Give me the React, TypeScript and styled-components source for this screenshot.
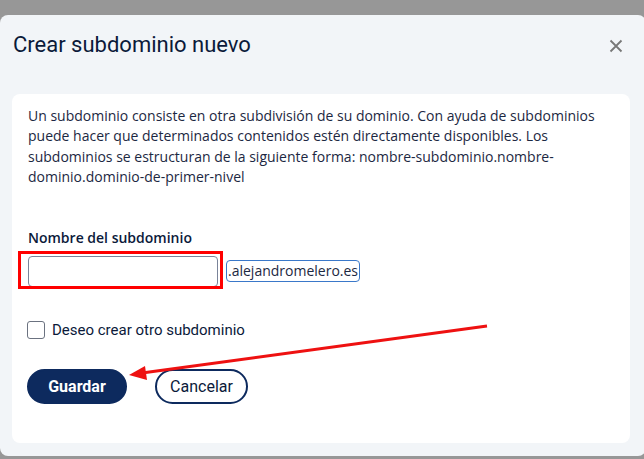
import React from 'react';
import styled, { createGlobalStyle } from 'styled-components';

const GlobalStyle = createGlobalStyle`
  html, body {
    margin: 0;
    padding: 0;
    background: #979797;
    height: 100%;
    overflow: hidden;
  }
  #root {
    height: 100%;
  }
`;

const Page = styled.div`
  position: relative;
  width: 644px;
  height: 459px;
  padding-top: 15px;
  box-sizing: border-box;
`;

const Modal = styled.div`
  width: 646px;
  height: 441px;
  background: #f2f5f8;
  border-radius: 8px;
  padding: 0 14px 13px 12px;
  box-sizing: border-box;
  display: flex;
  flex-direction: column;
`;

const Header = styled.div`
  height: 79px;
  display: flex;
  justify-content: space-between;
  align-items: flex-start;
  padding: 19px 0 0 1px;
  box-sizing: border-box;
`;

const Title = styled.h2`
  margin: 0;
  font-family: Roboto, 'Liberation Sans', sans-serif;
  font-weight: 400;
  font-size: 22px;
  line-height: 22px;
  color: #0b1a3a;
`;

const CloseButton = styled.button`
  border: none;
  background: transparent;
  padding: 0;
  margin: 5px 9px 0 0;
  width: 14px;
  height: 14px;
  cursor: pointer;
  display: flex;
`;

const Card = styled.div`
  position: relative;
  flex: 1;
  width: 618px;
  background: #fff;
  border-radius: 8px;
  padding: 12px 16px 0 16px;
  box-sizing: border-box;
`;

const Intro = styled.p`
  margin: 0;
  font-family: 'Open Sans', sans-serif;
  font-size: 14px;
  line-height: 20.4px;
  color: #1c2842;
`;

const Field = styled.div`
  margin-top: 40px;
  display: flex;
  flex-direction: column;
`;

const Label = styled.label`
  font-family: 'Open Sans', sans-serif;
  font-weight: 600;
  font-size: 14px;
  line-height: 20px;
  color: #0b1a3a;
`;

const InputRow = styled.div`
  margin-top: 8px;
  display: flex;
  align-items: center;
  gap: 8px;
`;

const InputWrap = styled.div`
  position: relative;
  display: flex;
`;

const TextInput = styled.input`
  width: 190px;
  height: 31px;
  box-sizing: border-box;
  border: 1px solid #7a8499;
  border-radius: 4px;
  outline: none;
  font-family: 'Open Sans', sans-serif;
  font-size: 14px;
`;

const Highlight = styled.span`
  position: absolute;
  left: -10px;
  top: -5px;
  width: 205px;
  height: 38px;
  box-sizing: border-box;
  border: 3px solid #ff0000;
  pointer-events: none;
`;

const Suffix = styled.span`
  height: 22px;
  box-sizing: border-box;
  padding: 0 1px;
  border: 1px solid #3a78c9;
  border-radius: 4px;
  font-family: 'Open Sans', sans-serif;
  font-size: 14px;
  line-height: 20px;
  color: #1c2842;
`;

const CheckRow = styled.label`
  margin-top: 34px;
  margin-left: -1px;
  display: flex;
  align-items: center;
  gap: 7px;
  font-family: Roboto, 'Liberation Sans', sans-serif;
  font-size: 15px;
  color: #0b1a3a;
`;

const Box = styled.span`
  width: 18px;
  height: 18px;
  box-sizing: border-box;
  border: 1.5px solid #6b7280;
  border-radius: 3px;
  background: #fff;
`;

const Actions = styled.div`
  margin-top: 30px;
  margin-left: -1px;
  display: flex;
  gap: 28px;
`;

const Button = styled.button<{ $primary?: boolean }>`
  height: 35px;
  padding: 0;
  width: ${(p) => (p.$primary ? '100px' : '93px')};
  border-radius: 18px;
  border: 2px solid #0d2a5e;
  background: ${(p) => (p.$primary ? '#0d2a5e' : '#fff')};
  color: ${(p) => (p.$primary ? '#fff' : '#0b1a3a')};
  font-family: Roboto, 'Liberation Sans', sans-serif;
  font-weight: ${(p) => (p.$primary ? 700 : 400)};
  font-size: 16px;
  cursor: pointer;
`;

const Arrow = styled.svg`
  position: absolute;
  left: 0;
  top: 0;
  pointer-events: none;
`;

const App: React.FC = () => {
  return (
    <>
      <GlobalStyle />
      <Page>
        <Modal>
          <Header>
            <Title>Crear subdominio nuevo</Title>
            <CloseButton aria-label="Cerrar">
              <svg width="14" height="14" viewBox="0 0 14 14">
                <path d="M1.5 1.5 L12.5 12.5 M12.5 1.5 L1.5 12.5" stroke="#777" strokeWidth="1.8" />
              </svg>
            </CloseButton>
          </Header>
          <Card>
            <Intro>
              Un subdominio consiste en otra subdivisión de su dominio. Con ayuda de subdominios
              puede hacer que determinados contenidos estén directamente disponibles. Los
              subdominios se estructuran de la siguiente forma: nombre-subdominio.nombre-dominio.dominio-de-primer-nivel
            </Intro>
            <Field>
              <Label>Nombre del subdominio</Label>
              <InputRow>
                <InputWrap>
                  <TextInput />
                  <Highlight />
                </InputWrap>
                <Suffix>.alejandromelero.es</Suffix>
              </InputRow>
            </Field>
            <CheckRow>
              <Box />
              Deseo crear otro subdominio
            </CheckRow>
            <Actions>
              <Button $primary>Guardar</Button>
              <Button>Cancelar</Button>
            </Actions>
          </Card>
        </Modal>
        <Arrow width="644" height="459">
          <line x1="487" y1="326" x2="142" y2="373" stroke="#ee1111" strokeWidth="3" />
          <polygon points="129,375 145,366 147,380" fill="#ee1111" />
        </Arrow>
      </Page>
    </>
  );
};

export default App;
